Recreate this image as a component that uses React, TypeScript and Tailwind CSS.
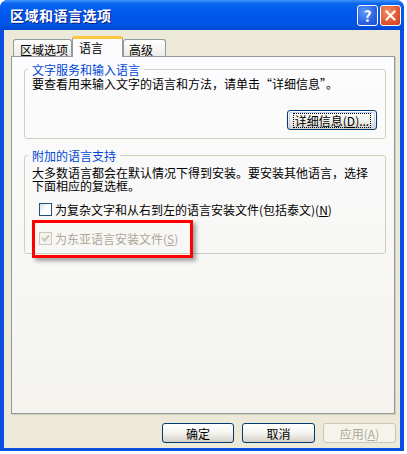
import type { ReactNode } from 'react'

const font = { fontFamily: '"Noto Sans CJK SC", "Noto Sans", sans-serif' }

function XpButton({ children, disabled, focused, className = '' }: { children: ReactNode; disabled?: boolean; focused?: boolean; className?: string }) {
  return (
    <button
      className={
        'flex h-[20px] items-center justify-center rounded-[3px] border bg-gradient-to-b p-[1px] text-[12px] leading-[13px] ' +
        (disabled
          ? 'border-[#C9C7BA] from-[#F5F4EA] to-[#F5F4EA] text-[#ACA899] '
          : 'border-[#003C74] from-white via-[#F4F4F0] to-[#D6D0C5] text-black ') +
        className
      }
    >
      <span
        className={
          'flex h-full w-full items-center justify-center rounded-[2px] ' +
          (focused ? 'border border-[#B9D1FA]' : '')
        }
      >
        <span className={focused ? 'border border-dotted border-black px-[1px]' : ''}>{children}</span>
      </span>
    </button>
  )
}

function Checkbox({ checked, disabled, label }: { checked?: boolean; disabled?: boolean; label: ReactNode }) {
  return (
    <div className="ml-[7px] flex h-[13px] items-center gap-[3px]">
      <span
        className={
          'flex h-[13px] w-[13px] items-center justify-center border ' +
          (disabled ? 'border-[#CAC8BB] bg-[#F4F3EE]' : 'border-[#1C5180] bg-gradient-to-br from-[#DCDCD7] via-white to-white')
        }
      >
        {checked && (
          <svg width="9" height="9" viewBox="0 0 9 9">
            <path d="M1 4 L3.5 6.5 L8 1.5" fill="none" stroke={disabled ? '#CAC8BB' : '#21A121'} strokeWidth="2" />
          </svg>
        )}
      </span>
      <span className={'text-[12px] leading-[13px] ' + (disabled ? 'text-[#ACA899]' : 'text-black')}>{label}</span>
    </div>
  )
}

export default function App() {
  return (
    <div className="min-h-screen bg-white" style={font}>
      <div className="flex h-[451px] w-[404px] flex-col overflow-hidden rounded-t-[8px] bg-[#0A4FE0]">
        {/* title bar */}
        <div className="flex h-[30px] shrink-0 items-center bg-[linear-gradient(180deg,#3D95FF_0%,#0A66F0_12%,#0058EE_40%,#0055E5_80%,#0048D4_100%)] pl-[10px] pr-[3px]">
          <span className="text-[14px] font-bold leading-[16px] tracking-[0.5px] text-white [text-shadow:1px_1px_0_#0A1E8A]">
            区域和语言选项
          </span>
          <div className="ml-auto flex gap-[2px]">
            <div className="flex h-[21px] w-[21px] items-center justify-center rounded-[3px] border border-white bg-[radial-gradient(circle_at_35%_30%,#5E9AFA,#2A63E0_60%,#1C4FD0)] text-[15px] font-bold leading-none text-white">
              ?
            </div>
            <div className="flex h-[21px] w-[21px] items-center justify-center rounded-[3px] border border-white bg-[radial-gradient(circle_at_35%_30%,#F0906A,#E0552E_60%,#C8401E)]">
              <svg width="11" height="11" viewBox="0 0 11 11">
                <path d="M1.5 1.5 L9.5 9.5 M9.5 1.5 L1.5 9.5" stroke="white" strokeWidth="2" strokeLinecap="square" />
              </svg>
            </div>
          </div>
        </div>

        {/* client area */}
        <div className="mx-[4px] mb-[3px] flex flex-1 flex-col bg-[#ECE9D8]">
          <div className="flex items-end pl-[9px] pt-[6px] text-[12px] leading-[13px]">
            <div className="h-[17px] w-[59px] rounded-t-[3px] border border-b-0 border-[#919B9C] bg-gradient-to-b from-white to-[#ECEBE6] pl-[6px] pt-[3px]">
              区域选项
            </div>
            <div className="relative z-10 mb-[-1px] h-[21px] w-[51px] rounded-t-[3px] border border-b-0 border-t-[3px] border-[#919B9C] border-t-[#FFC83C] bg-[#FCFCFE] pl-[6px] pt-[2px]">
              语言
            </div>
            <div className="h-[17px] w-[43px] rounded-t-[3px] border border-b-0 border-[#919B9C] bg-gradient-to-b from-white to-[#ECEBE6] pl-[5px] pt-[3px]">
              高级
            </div>
          </div>

          <div className="relative ml-[7px] h-[358px] w-[384px] border border-[#919B9C] bg-gradient-to-b from-[#FCFCFE] to-[#F4F3EE] px-[12px] text-[12px] leading-[13px] shadow-[1px_1px_0_#D0CEBF]">
            <fieldset className="mt-[6px] h-[76px] w-[362px] rounded-[3px] border border-[#D0D0BF] pl-[3px]">
              <legend className="px-[4px] text-[#0046D5]">文字服务和输入语言</legend>
              <div className="ml-[4px] mt-[1px]">要查看用来输入文字的语言和方法，请单击“详细信息”。</div>
              <div className="mt-[20px] flex justify-end pr-[8px]">
                <XpButton focused className="w-[90px]">
                  详细信息(<u>D</u>)...
                </XpButton>
              </div>
            </fieldset>

            <fieldset className="mt-[10px] h-[105px] w-[362px] rounded-[3px] border border-[#D0D0BF] pl-[3px]">
              <legend className="px-[4px] text-[#0046D5]">附加的语言支持</legend>
              <div className="ml-[4px] mt-[4px]">
                大多数语言都会在默认情况下得到安装。要安装其他语言，选择
                <br />
                下面相应的复选框。
              </div>
              <div className="ml-[4px] mt-[11px]">
                <Checkbox
                  label={
                    <>
                      为复杂文字和从右到左的语言安装文件(包括泰文)(<u>N</u>)
                    </>
                  }
                />
                <div className="mt-[16px]">
                  <Checkbox
                    checked
                    disabled
                    label={
                      <>
                        为东亚语言安装文件(<u>S</u>)
                      </>
                    }
                  />
                </div>
              </div>
            </fieldset>

            {/* annotation */}
            <div className="absolute left-[20px] top-[163px] h-[38px] w-[161px] border-[3px] border-[#FF0000] shadow-[3px_3px_4px_rgba(0,0,0,0.35)]" />
          </div>

          <div className="mt-[9px] flex justify-end gap-[8px] pr-[4px]">
            <XpButton className="w-[72px]">确定</XpButton>
            <XpButton className="w-[73px]">取消</XpButton>
            <XpButton disabled className="w-[73px]">
              应用(<u>A</u>)
            </XpButton>
          </div>
        </div>
      </div>
    </div>
  )
}
